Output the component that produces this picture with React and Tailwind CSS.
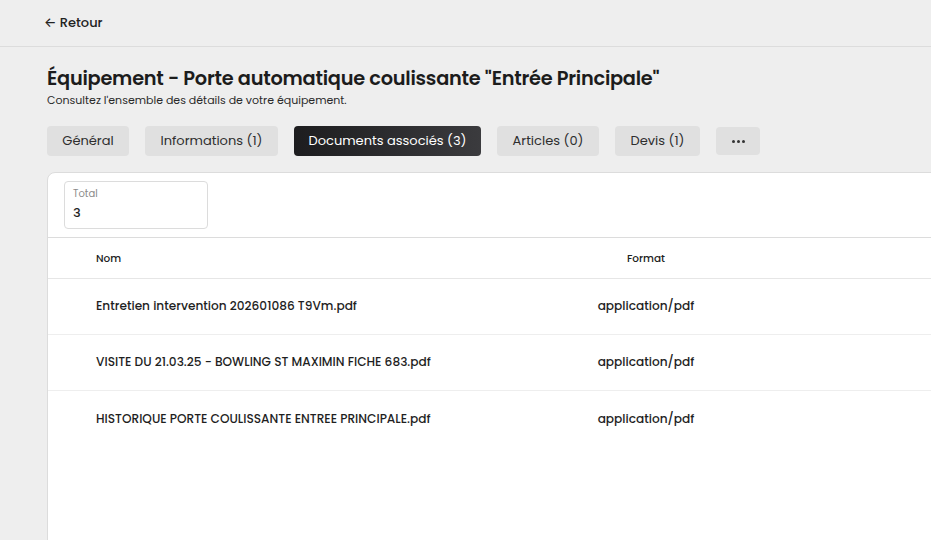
import React from "react";

const tabs = [
  { label: "Général", w: "w-[82px]" },
  { label: "Informations (1)", w: "w-[133px]" },
  { label: "Documents associés (3)", w: "w-[187px]", active: true },
  { label: "Articles (0)", w: "w-[102px]" },
  { label: "Devis (1)", w: "w-[85px]" },
];

const docs = [
  "Entretien intervention 202601086 T9Vm.pdf",
  "VISITE DU 21.03.25 - BOWLING ST MAXIMIN FICHE 683.pdf",
  "HISTORIQUE PORTE COULISSANTE ENTREE PRINCIPALE.pdf",
];

export default function App() {
  return (
    <div
      className="w-[931px] h-[540px] overflow-hidden bg-[#eeeeee] text-[#1f1f1f]"
      style={{ fontFamily: "Poppins, Inter, 'Noto Sans', sans-serif" }}
    >
      <div className="h-[47px] border-b border-[#dcdcdc] flex items-center pl-[44px]">
        <span className="text-[13px] font-medium text-[#222]">← Retour</span>
      </div>

      <div className="pl-[47px] pt-[19px]">
        <h1 className="text-[19.35px] font-semibold leading-[26px] tracking-[-0.25px] text-[#1c1c1c]">
          Équipement - Porte automatique coulissante "Entrée Principale"
        </h1>
        <p className="text-[11px] leading-[14px] mt-[1px] text-[#2a2a2a]">
          Consultez l'ensemble des détails de votre équipement.
        </p>

        <div className="flex gap-4 mt-[19px] items-center">
          {tabs.map((t) => (
            <div
              key={t.label}
              className={
                t.active
                  ? `${t.w} h-[30px] rounded-[4px] flex items-center justify-center text-[13px] text-white bg-gradient-to-r from-[#1d1d1f] to-[#3b3b3e]`
                  : `${t.w} h-[30px] rounded-[4px] flex items-center justify-center text-[13px] text-[#2e2e2e] bg-[#e0e0e0]`
              }
            >
              {t.label}
            </div>
          ))}
          <div className="w-[44px] h-[28px] rounded-[4px] bg-[#e0e0e0] flex items-center justify-center gap-[2px]">
            <span className="w-[3px] h-[3px] rounded-full bg-[#333]" />
            <span className="w-[3px] h-[3px] rounded-full bg-[#333]" />
            <span className="w-[3px] h-[3px] rounded-full bg-[#333]" />
          </div>
        </div>

        <div className="mt-[16px] w-[1000px] h-[400px] bg-white border border-[#dcdcdc] rounded-[8px]">
          <div className="h-[65px] border-b border-[#dcdcdc] pl-[16px] pt-[8px]">
            <div className="w-[144px] h-[48px] border border-[#dcdcdc] rounded-[4px] px-[8px] pt-[5px]">
              <div className="text-[10px] leading-[14px] text-[#8a8a8a]">Total</div>
              <div className="text-[13px] leading-[18px] font-medium text-[#1f1f1f] mt-[3px]">3</div>
            </div>
          </div>
          <div className="grid grid-cols-[48px_470px_160px_1fr] h-[41px] items-center border-b border-[#e6e6e6] text-[10.5px] font-medium text-[#222] pt-[2px]">
            <div />
            <div>Nom</div>
            <div className="text-center">Format</div>
            <div />
          </div>
          {docs.map((d, i) => (
            <div
              key={d}
              className={`grid grid-cols-[48px_470px_160px_1fr] h-[56px] items-center text-[12.15px] font-medium text-[#1f1f1f] ${
                i < docs.length - 1 ? "border-b border-[#eeeeee]" : ""
              }`}
            >
              <div />
              <div className="whitespace-nowrap">{d}</div>
              <div className="text-center">application/pdf</div>
              <div />
            </div>
          ))}
        </div>
      </div>
    </div>
  );
}
